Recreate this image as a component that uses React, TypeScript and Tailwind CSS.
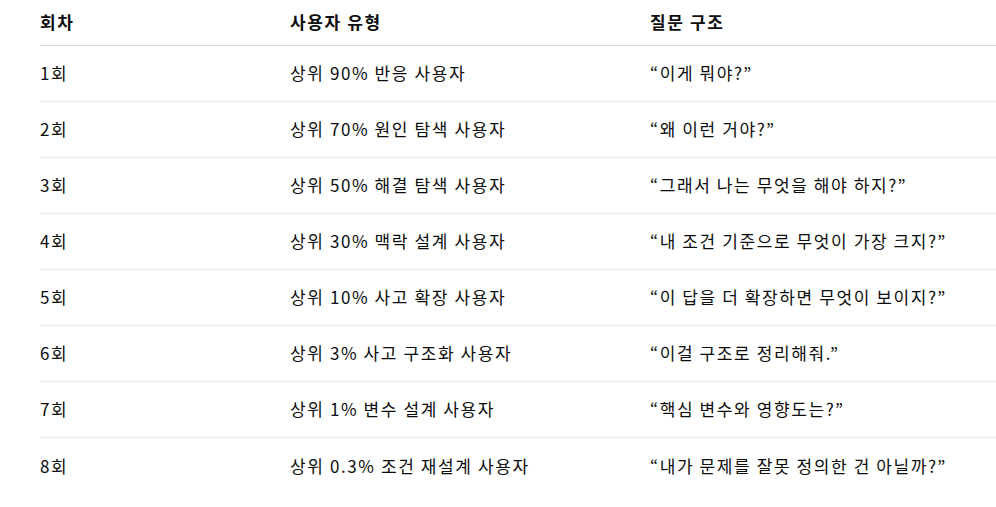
const rows = [
  ['1회', '상위 90% 반응 사용자', '“이게 뭐야?”'],
  ['2회', '상위 70% 원인 탐색 사용자', '“왜 이런 거야?”'],
  ['3회', '상위 50% 해결 탐색 사용자', '“그래서 나는 무엇을 해야 하지?”'],
  ['4회', '상위 30% 맥락 설계 사용자', '“내 조건 기준으로 무엇이 가장 크지?”'],
  ['5회', '상위 10% 사고 확장 사용자', '“이 답을 더 확장하면 무엇이 보이지?”'],
  ['6회', '상위 3% 사고 구조화 사용자', '“이걸 구조로 정리해줘.”'],
  ['7회', '상위 1% 변수 설계 사용자', '“핵심 변수와 영향도는?”'],
  ['8회', '상위 0.3% 조건 재설계 사용자', '“내가 문제를 잘못 정의한 건 아닐까?”'],
];

export default function App() {
  return (
    <div className="w-[996px] h-[507px] overflow-hidden bg-white pl-10 font-['Segoe_UI','Noto_Sans_CJK_KR',sans-serif] text-[#0d0d0d]">
      <table className="w-[1000px] border-collapse text-left">
        <thead>
          <tr className="border-b border-[#d9d9d9] text-[17px] tracking-[1.6px]">
            <th className="h-[45px] w-[250px] font-bold align-middle pb-[1px]">회차</th>
            <th className="h-[45px] w-[360px] font-bold align-middle pb-[1px]">사용자 유형</th>
            <th className="h-[45px] font-bold align-middle pb-[1px]">질문 구조</th>
          </tr>
        </thead>
        <tbody className="text-[17px] tracking-[1.6px]">
          {rows.map((r, i) => (
            <tr key={i} className={i < rows.length - 1 ? 'border-b border-[#ececec]' : ''}>
              <td className="h-[56px] align-middle">{r[0]}</td>
              <td className="h-[56px] align-middle">{r[1]}</td>
              <td className="h-[56px] align-middle">{r[2]}</td>
            </tr>
          ))}
        </tbody>
      </table>
    </div>
  );
}
